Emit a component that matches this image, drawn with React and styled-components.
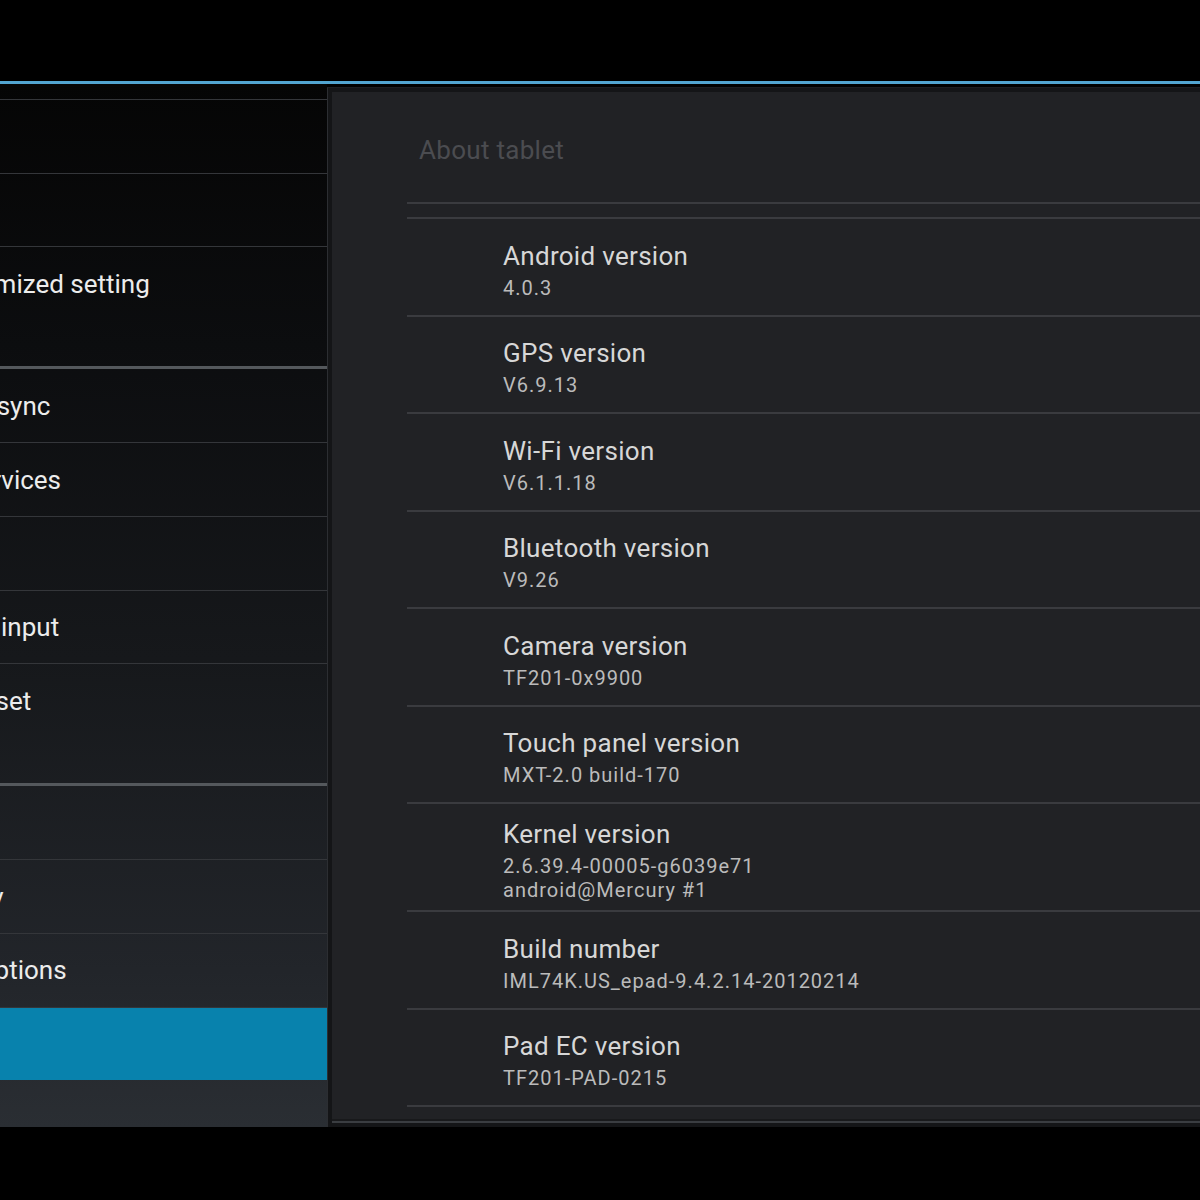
import React from 'react';
import styled, { createGlobalStyle } from 'styled-components';

const GlobalStyle = createGlobalStyle`
  html, body {
    margin: 0;
    padding: 0;
    background: #000;
  }
  body {
    font-family: Roboto, "Noto Sans", "Liberation Sans", sans-serif;
  }
  * {
    box-sizing: border-box;
  }
`;

const Screen = styled.div`
  width: 1200px;
  height: 1200px;
  background: #000;
  overflow: hidden;
  display: flex;
  flex-direction: column;
`;

const TopBar = styled.div`
  height: 81px;
  flex-shrink: 0;
  background: #000;
`;

const AccentLine = styled.div`
  height: 3px;
  flex-shrink: 0;
  background: #52a5d1;
`;

const Main = styled.div`
  height: 1043px;
  flex-shrink: 0;
  display: flex;
`;

// the settings list is scrolled and its left part is off screen
const LeftPane = styled.div`
  width: 327px;
  flex-shrink: 0;
  overflow: hidden;
  background: linear-gradient(180deg, #050505 0%, #0c0d0f 25%, #16181b 55%, #22252a 85%, #2a2e33 100%);
`;

const NavList = styled.div`
  margin-top: -58.5px;
  margin-left: -142px;
  width: 469px;
`;

const NavRow = styled.div`
  height: 73.6px;
  display: flex;
  align-items: center;
  border-top: ${p => (p.$first ? 'none' : '1px solid #34363a')};
  background: ${p => (p.$selected ? '#0882ad' : 'transparent')};
  color: #ececec;
  font-size: 26px;
  white-space: nowrap;
`;

const NavHeader = styled.div`
  height: 49px;
  border-bottom: 3px solid #54585c;
`;

const DetailFrame = styled.div`
  flex: 1;
  margin-top: 3px;
  padding: 4px 0 8px 4px;
  background: #141517;
  border-left: 1px solid #2c2e32;
  border-top: 1px solid #1d1e21;
  display: flex;
`;

const DetailPanel = styled.div`
  flex: 1;
  background: #212225;
  box-shadow: 0 2px 0 #18191b, 0 4px 0 #3a3d41;
  padding-left: 75px;
`;

const DetailHeader = styled.div`
  height: 112px;
  padding: 42px 0 0 12px;
  font-size: 26px;
  line-height: 32px;
  letter-spacing: 0.3px;
  color: #4b4c50;
  border-bottom: 2px solid #3a3b3f;
  margin-bottom: 13px;
`;

const InfoList = styled.div`
  border-top: 2px solid #3a3b3f;
`;

const InfoRow = styled.div`
  min-height: 97.5px;
  padding: 13px 0 8px 96px;
  display: flex;
  flex-direction: column;
  justify-content: center;
  border-bottom: 2px solid #3a3b3f;
`;

const InfoTitle = styled.div`
  font-size: 26px;
  line-height: 34px;
  letter-spacing: 0.3px;
  color: #d7d7d7;
`;

const InfoValue = styled.div`
  margin-top: 3px;
  font-size: 20px;
  line-height: 24px;
  letter-spacing: 1px;
  color: #bbbbbb;
`;

const navSections = [
  { header: false, items: ['', '', '', 'ASUS customized setting'] },
  { header: true, items: ['Accounts & sync', 'Location services', '', 'Language & input', 'Backup & reset'] },
  { header: true, items: ['', 'Accessibility', 'Developer options', ''] },
];

const info = [
  { title: 'Android version', value: ['4.0.3'] },
  { title: 'GPS version', value: ['V6.9.13'] },
  { title: 'Wi-Fi version', value: ['V6.1.1.18'] },
  { title: 'Bluetooth version', value: ['V9.26'] },
  { title: 'Camera version', value: ['TF201-0x9900'] },
  { title: 'Touch panel version', value: ['MXT-2.0 build-170'] },
  { title: 'Kernel version', value: ['2.6.39.4-00005-g6039e71', 'android@Mercury #1'] },
  { title: 'Build number', value: ['IML74K.US_epad-9.4.2.14-20120214'] },
  { title: 'Pad EC version', value: ['TF201-PAD-0215'] },
];

export default function App() {
  return (
    <>
      <GlobalStyle />
      <Screen>
        <TopBar />
        <AccentLine />
        <Main>
          <LeftPane>
            <NavList>
              {navSections.map((section, si) => (
                <React.Fragment key={si}>
                  {section.header && <NavHeader />}
                  {section.items.map((label, i) => (
                    <NavRow
                      key={i}
                      $first={i === 0}
                      $selected={si === 2 && i === 3}
                    >
                      {label}
                    </NavRow>
                  ))}
                </React.Fragment>
              ))}
            </NavList>
          </LeftPane>
          <DetailFrame>
            <DetailPanel>
              <DetailHeader>About tablet</DetailHeader>
              <InfoList>
                {info.map(item => (
                  <InfoRow key={item.title}>
                    <InfoTitle>{item.title}</InfoTitle>
                    <InfoValue>
                      {item.value.map(v => (
                        <div key={v}>{v}</div>
                      ))}
                    </InfoValue>
                  </InfoRow>
                ))}
              </InfoList>
            </DetailPanel>
          </DetailFrame>
        </Main>
      </Screen>
    </>
  );
}
